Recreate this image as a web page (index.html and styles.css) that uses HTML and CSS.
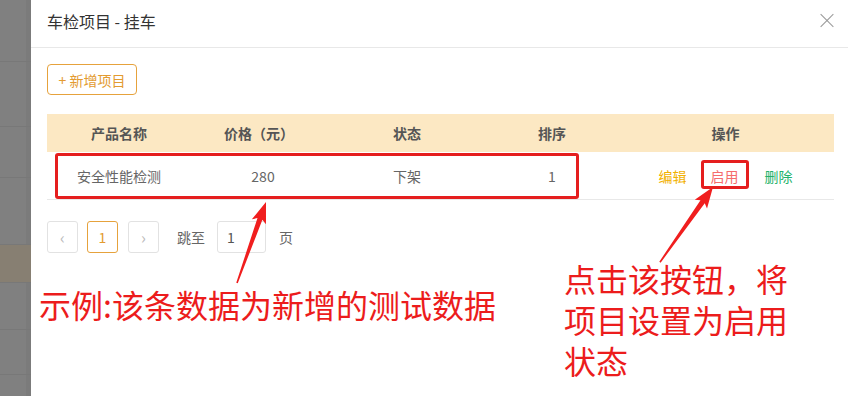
FILE: index.html
```html
<!DOCTYPE html>
<html>

<head>
    <meta charset="utf-8">
    <title>车检项目 - 挂车</title>
    <link rel="stylesheet" href="styles.css">
</head>

<body>
    <div class="page">
        <!-- 뒤쪽 페이지 (마스크) -->
        <div class="mask">
            <div class="mask-row r1"></div>
            <div class="mask-row r2"></div>
            <div class="mask-row r3"></div>
            <div class="mask-row r4"></div>
            <div class="mask-row r5 active"></div>
            <div class="mask-row r6"></div>
            <div class="mask-row r7"></div>
        </div>

        <!-- 드로어 -->
        <div class="drawer">
            <div class="drawer-head">
                <span class="drawer-title">车检项目 - 挂车</span>
                <span class="close"></span>
            </div>

            <div class="drawer-body">
                <button class="btn-add">+ 新增项目</button>

                <div class="table">
                    <div class="tr th">
                        <div class="c1">产品名称</div>
                        <div class="c2">价格（元）</div>
                        <div class="c3">状态</div>
                        <div class="c4">排序</div>
                        <div class="c5">操作</div>
                    </div>
                    <div class="tr td">
                        <div class="c1">安全性能检测</div>
                        <div class="c2">280</div>
                        <div class="c3">下架</div>
                        <div class="c4">1</div>
                        <div class="c5 ops">
                            <a class="op edit">编辑</a>
                            <a class="op enable">启用</a>
                            <a class="op del">删除</a>
                        </div>
                    </div>
                </div>

                <div class="pager">
                    <span class="pg prev">&lsaquo;</span>
                    <span class="pg cur">1</span>
                    <span class="pg next">&rsaquo;</span>
                    <span class="jump">跳至</span>
                    <span class="jump-input">1</span>
                    <span class="jump">页</span>
                </div>
            </div>
        </div>

        <!-- 주석 (빨간 표시) -->
        <div class="mark mark-row"></div>
        <div class="mark mark-btn"></div>
        <svg class="arrows" width="848" height="396" viewBox="0 0 848 396">
            <polygon transform="translate(266 202) rotate(19.7)"
                points="0,0 7.5,21 2.6,18 0.8,86 -0.8,86 -2.6,18 -7.5,21" />
            <polygon transform="translate(713 187) rotate(35.2)"
                points="0,0 7.5,21 2.6,18 0.8,92 -0.8,92 -2.6,18 -7.5,21" />
        </svg>
        <p class="note note-left">示例:该条数据为新增的测试数据</p>
        <div class="note note-right">
            <span>点击该按钮，将</span>
            <span>项目设置为启用</span>
            <span>状态</span>
        </div>
    </div>
</body>

</html>
```

FILE: styles.css
```css
/* 기본 */
html, body {
    margin: 0;
    padding: 0;
}
body {
    font-family: "Noto Sans CJK SC", "Noto Sans", sans-serif;
    font-size: 14px;
    color: #666;
}

.page {
    position: relative;
    display: flex;
    width: 848px;
    height: 396px;
    overflow: hidden;
}

/* 왼쪽 마스크 영역 */
.mask {
    width: 31px;
    flex-shrink: 0;
    display: flex;
    flex-direction: column;
    background: #808080;
    box-shadow: inset -5px 0 0 #7b7b7b;
}
.mask-row {
    border-bottom: 1px solid #787878;
}
.r1 { height: 61px; }
.r2 { height: 64px; }
.r3 { height: 50px; }
.r4 { height: 66px; }
.r5 { height: 37px; }
.r6 { height: 46px; }
.r7 { height: 44px; }
.mask-row.active {
    background: #877f72;
}

/* 드로어 */
.drawer {
    flex: 1;
    background: #fff;
}
.drawer-head {
    display: flex;
    align-items: center;
    justify-content: space-between;
    height: 48px;
    padding: 0 14px 6px 16px;
    box-sizing: border-box;
    border-bottom: 1px solid #e8e8e8;
}
.drawer-title {
    font-size: 16px;
    color: #333;
    line-height: 22px;
}

/* 닫기 X */
.close {
    position: relative;
    width: 14px;
    height: 14px;
}
.close::before,
.close::after {
    content: "";
    position: absolute;
    left: -2px;
    top: 6px;
    width: 18px;
    height: 1px;
    background: #999;
    transform: rotate(45deg);
}
.close::after {
    transform: rotate(-45deg);
}

.drawer-body {
    padding: 16px 14px 0 16px;
}

.btn-add {
    display: block;
    width: 90px;
    height: 31px;
    padding: 0;
    border: 1px solid #e6a23c;
    border-radius: 4px;
    background: #fff;
    color: #e39b30;
    font-family: inherit;
    font-size: 14px;
}

/* 테이블 */
.table {
    margin-top: 19px;
}
.tr {
    display: grid;
    grid-template-columns: 144px 136px 160px 130px 1fr;
    align-items: center;
    text-align: center;
}
.th {
    height: 38px;
    background: #fce8c3;
    color: #555;
    font-weight: bold;
}
.td {
    height: 47px;
    border-bottom: 1px solid #e8e8e8;
}
.td .c2 {
    padding-left: 8px;
}
.ops {
    display: flex;
    justify-content: center;
    gap: 24px;
}
.op {
    cursor: pointer;
}
.edit { color: #f2b100; }
.enable { color: #f56c6c; }
.del { color: #23b26a; margin-left: 2px; }

/* 페이지네이션 */
.pager {
    display: flex;
    align-items: center;
    margin-top: 21px;
}
.pg {
    width: 31px;
    height: 32px;
    box-sizing: border-box;
    border: 1px solid #e2e2e2;
    border-radius: 3px;
    display: flex;
    align-items: center;
    justify-content: center;
    color: #bbb;
    font-size: 16px;
    margin-right: 9px;
}
.pg.cur {
    border-color: #e6a23c;
    color: #e39b30;
    font-size: 14px;
    margin-right: 10px;
}
.pg.next {
    margin-right: 18px;
}
.jump {
    color: #666;
}
.jump-input {
    width: 49px;
    height: 32px;
    box-sizing: border-box;
    margin: 0 13px 0 12px;
    border: 1px solid #e2e2e2;
    border-radius: 3px;
    padding-left: 9px;
    line-height: 30px;
    color: #555;
}

/* 주석 레이어 */
.mark {
    position: absolute;
    border: 3px solid #e51e1e;
    border-radius: 3px;
}
.mark-row {
    left: 55px;
    top: 153px;
    width: 518px;
    height: 40px;
}
.mark-btn {
    left: 701px;
    top: 160px;
    width: 42px;
    height: 23px;
}
.arrows {
    position: absolute;
    left: 0;
    top: 0;
}
.arrows polygon {
    fill: #f01e1e;
}
.note {
    position: absolute;
    margin: 0;
    color: #ec1c1c;
    font-size: 32px;
    line-height: 40px;
}
.note-left {
    left: 39px;
    top: 284px;
}
.note-right {
    left: 564px;
    top: 258px;
    display: flex;
    flex-direction: column;
    gap: 0;
}
.note-right span {
    display: block;
    height: 41px;
    line-height: 41px;
}
```
